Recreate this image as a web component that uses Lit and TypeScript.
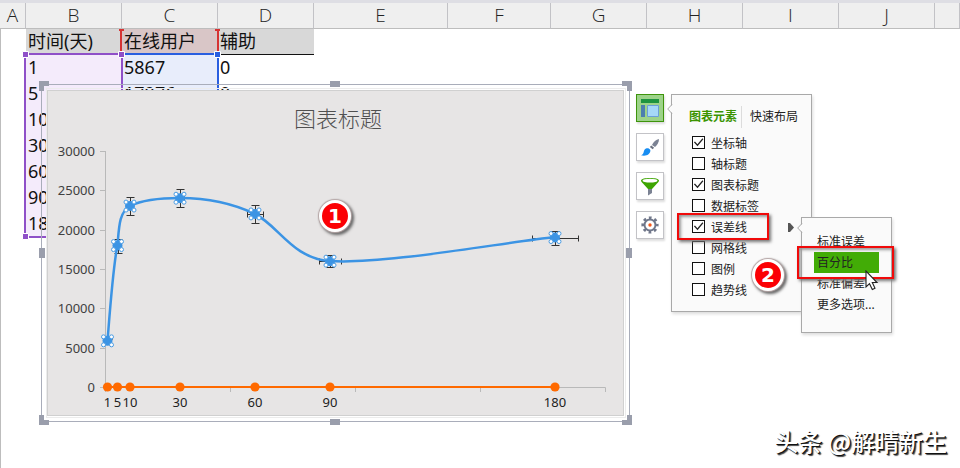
import { LitElement, html, svg, css } from "lit";
import { customElement, property, state } from "lit/decorators.js";

interface Sample {
  day: number;
  users: number;
}

const SAMPLES: Sample[] = [
  { day: 1, users: 5867 },
  { day: 5, users: 17976 },
  { day: 10, users: 23000 },
  { day: 30, users: 24000 },
  { day: 60, users: 22000 },
  { day: 90, users: 16000 },
  { day: 180, users: 19000 },
];

@customElement("sheet-grid")
class SheetGrid extends LitElement {
  static styles = css`
    :host { display: block; position: relative; }
    table {
      width: 100%;
      table-layout: fixed;
      border-collapse: separate;
      border-spacing: 0;
      font-size: 18px;
      color: #111;
    }
    .narrow { width: 26px; }
    .mid { width: 96px; }
    .wide { width: 134px; }
    .semi { width: 103px; }
    th, td { padding: 0; box-sizing: border-box; white-space: nowrap; vertical-align: top; }
    thead th {
      height: 26px;
      line-height: 25px;
      font-family: "Open Sans", "Noto Sans", sans-serif;
      font-size: 19px;
      font-weight: 300;
      color: #222;
      background: #efefef;
      border-right: 1px solid #c2c2c6;
      border-bottom: 1px solid #bdbdbd;
    }
    td { height: 26px; line-height: 24px; padding-left: 2px; }
    td.head { background: #d8d8d8; }
    td.pink { background: #d9c6c7; }
    td.line { border-bottom: 1px solid #111; }
    td.time { background: #f4ebfb; }
    td.users { background: #e8edfb; }
    td.edge { padding: 0; border-left: 1px solid #bdbdbd; }
    .ranges { position: absolute; left: 20px; top: 26px; width: 204px; height: 220px; }
  `;

  render() {
    const letters = ["A", "B", "C", "D", "E", "F", "G", "H", "I", "J", ""];
    const times = ["1", "5", "10", "30", "60", "90", "180"];
    const users = ["5867", "17976"];
    return html`
      <table>
        <colgroup>
          <col class="narrow" /><col class="mid" /><col class="mid" /><col class="mid" />
          <col class="wide" /><col class="semi" /><col class="mid" /><col class="mid" />
          <col class="mid" /><col class="mid" /><col />
        </colgroup>
        <thead>
          <tr>${letters.map((l) => html`<th>${l}</th>`)}</tr>
        </thead>
        <tbody>
          <tr>
            <td class="edge"></td>
            <td class="head">时间(天)</td>
            <td class="pink">在线用户</td>
            <td class="head line">辅助</td>
          </tr>
          ${times.map(
            (t, i) => html`<tr>
              <td class="edge"></td>
              <td class="time">${t}</td>
              <td class="users">${users[i] ?? ""}</td>
              <td>${i < 2 ? "0" : ""}</td>
            </tr>`
          )}
        </tbody>
      </table>
      <svg class="ranges" viewBox="20 29 204 220" aria-hidden="true">
        <path d="M25 54H122V237H25Z" fill="none" stroke="#8f50c8" stroke-width="2" />
        <path d="M122 54H218V236" fill="none" stroke="#2a5fe0" stroke-width="2" />
        <path d="M122 55V236" fill="none" stroke="#8f50c8" stroke-width="2" />
        <path d="M121 30V52M218 30V52" stroke="#d63333" stroke-width="2" />
        <path d="M119 30H124M215 30H220" stroke="#d63333" stroke-width="2" />
        <g stroke="#fff" stroke-width="1">
          <path d="M22.500 51.500h6v6h-6zM118.500 51.500h6v6h-6zM22.500 233.500h6v6h-6z" fill="#8f50c8" />
          <path d="M214.500 51.500h6v6h-6z" fill="#2a5fe0" />
        </g>
      </svg>
    `;
  }
}

@customElement("error-bar-chart")
class ErrorBarChart extends LitElement {
  static styles = css`
    :host { display: block; }
    svg { display: block; width: 100%; height: auto; }
    .title { font-size: 22px; font-weight: 300; fill: #505050; text-anchor: middle; }
    .tick { font-size: 13px; fill: #404040; text-anchor: end; }
    .day { font-size: 13px; fill: #222; text-anchor: middle; }
    .axis { stroke: #b9b9b9; fill: none; }
    .error { stroke: #333; fill: none; }
    .grip { fill: #fff; stroke: #4a9ce4; }
  `;

  private px(day: number) {
    return 105 + day * 2.5;
  }

  private py(value: number) {
    return 387 - (value * 236) / 30000;
  }

  private errorBar(s: Sample) {
    const x = Math.round(this.px(s.day)) + 0.5;
    const y = Math.round(this.py(s.users)) + 0.5;
    const dx = Math.round(s.day * 0.05 * 2.5);
    const dy = Math.round((s.users * 0.05 * 236) / 30000);
    return svg`<path class="error" d="M${x} ${y - dy}V${y + dy}M${x - 4} ${y - dy}h8M${x - 4} ${y + dy}h8
      M${x - dx} ${y}H${x + dx}M${x - dx} ${y - 3}v6M${x + dx} ${y - 3}v6"/>`;
  }

  private marker(s: Sample) {
    const x = this.px(s.day);
    const y = this.py(s.users);
    return svg`
      <circle cx=${x} cy=${y} r="5" fill="#3c94e4"/>
      ${[[-4, -4], [4, -4], [-4, 4], [4, 4]].map(
        ([a, b]) => svg`<circle class="grip" cx=${x + a} cy=${y + b} r="2"/>`
      )}`;
  }

  render() {
    const levels = [0, 5000, 10000, 15000, 20000, 25000, 30000];
    const frame = "#9a9eac";
    return html`
      <svg viewBox="38 81 595 344" role="img" aria-label="图表标题">
        <rect x="41.500" y="84.500" width="588" height="337" fill="none" stroke="#a9adba" />
        <rect x="46.500" y="88.500" width="579" height="329" fill="none" stroke="#ececec" />
        <rect x="47.500" y="90.500" width="576" height="325" fill="#e7e5e5" stroke="#d0d0d0" />
        <g fill=${frame}>
          <path d="M39 81h10v5h-5v5h-5zM622 81h10v10h-5v-5h-5zM39 415h5v5h5v5h-10zM632 415v10h-10v-5h5v-5z" />
          <path d="M330 81h10v6h-10zM330 419h10v6h-10zM39 248h6v10h-6zM626 248h6v10h-6z" />
        </g>
        <text class="title" x="338" y="127">图表标题</text>
        <path class="axis" d="M105.500 151V392M105 387.500H605.500V392M230.500 387v5M355.500 387v5M480.500 387v5" />
        ${levels.map((v) => {
          const y = Math.round(this.py(v)) + 0.5;
          return svg`<path class="axis" d="M100 ${y}h6"/>
            <text class="tick" x="95" y=${y + 4}>${v}</text>`;
        })}
        ${SAMPLES.map((s) => this.errorBar(s))}
        <path
          d="M107.500 341C110 310 113 267 117.500 245C119 228 119 212 130 206C142 200 162 198 180 198
             C205 198 232 203 255 214C279 226 293 259 330 261C380 265 500 243 555 237"
          fill="none" stroke="#3c94e4" stroke-width="2.500" />
        ${SAMPLES.map((s) => this.marker(s))}
        <path d="M107 387H555" stroke="#ff6a00" stroke-width="2" />
        ${SAMPLES.map(
          (s) => svg`<circle cx=${this.px(s.day)} cy="387" r="4.600" fill="#ff6a00"/>
            <text class="day" x=${this.px(s.day)} y="407">${s.day}</text>`
        )}
      </svg>
    `;
  }
}

@customElement("step-badge")
class StepBadge extends LitElement {
  static styles = css`
    :host {
      display: grid;
      place-items: center;
      box-sizing: border-box;
      width: 32px;
      height: 32px;
      border: 3px solid #fff;
      border-radius: 50%;
      background: #fb0004;
      box-shadow: 0 0 1px 1px #b5a5a5, 2px 2px 3px 1px #666;
      color: #fff;
      font: bold 20px/26px "DejaVu Sans", "Noto Sans", sans-serif;
    }
  `;
  @property({ type: Number }) step = 1;
  render() {
    return html`${this.step}`;
  }
}

@customElement("element-panel")
class ElementPanel extends LitElement {
  static styles = css`
    :host { display: flex; align-items: flex-start; gap: 7px; }
    button { font: inherit; color: inherit; padding: 0; border: 0; background: none; text-align: left; }
    .tools { display: flex; flex-direction: column; gap: 11px; }
    .tool {
      box-sizing: border-box;
      width: 28px;
      height: 28px;
      border: 1px solid #c3c3c7;
      background: #fff;
      box-shadow: 1px 2px 2px #ddd;
    }
    .tool.on { background: #9dd389; border-color: #3e940c; }
    .tool svg { display: block; width: 26px; height: 26px; }
    .panel {
      position: relative;
      box-sizing: border-box;
      width: 141px;
      padding: 11px 0 11px;
      border: 1px solid #a9a9a9;
      background: #fafafa;
      box-shadow: 1px 2px 3px #ddd;
      color: #222;
      font-size: 12px;
    }
    .notch { position: absolute; left: -5px; width: 6px; height: 10px; }
    .panel > .notch { top: 9px; }
    .tabs { display: flex; padding-left: 17px; line-height: 22px; margin-bottom: 4px; }
    .tabs button { padding-right: 4px; }
    .tabs button + button { border-left: 1px solid #dcdcdc; padding: 0 0 0 8px; }
    .tabs .current { color: #3b9400; font-weight: bold; }
    .row { display: flex; align-items: center; gap: 6px; height: 21px; padding-left: 20px; }
    input {
      appearance: none;
      box-sizing: border-box;
      display: grid;
      width: 13px;
      height: 13px;
      margin: 0;
      border: 1px solid #111;
      background: #fff;
    }
    input:checked::before {
      content: "";
      background: #222;
      clip-path: polygon(8% 48%, 18% 42%, 40% 66%, 86% 12%, 94% 20%, 41% 84%);
    }
    .arrow { position: absolute; left: 116px; top: 128px; width: 6px; height: 9px; }
    .menu {
      position: absolute;
      left: 129px;
      top: 122px;
      box-sizing: border-box;
      width: 91px;
      padding: 13px 12px 17px;
      display: flex;
      flex-direction: column;
      border: 1px solid #a9a9a9;
      background: #fafafa;
      box-shadow: 1px 2px 3px #ddd;
    }
    .menu > .notch { top: 5px; }
    .menu button { height: 21px; line-height: 21px; padding-left: 3px; white-space: nowrap; }
    .menu .hot { background: #42ac06; }
    .mark {
      position: absolute;
      box-sizing: border-box;
      border: 2px solid #f00a0a;
      box-shadow: 2px 2px 3px #777, inset 2px 2px 3px #999;
      pointer-events: none;
    }
    .mark.first { left: 5px; top: 118px; width: 92px; height: 27px; }
    .mark.second { left: 125px; top: 151px; width: 97px; height: 33px; }
    step-badge { position: absolute; left: 80px; top: 164px; }
    .pointer { position: absolute; left: 193px; top: 175px; width: 14px; height: 22px; }
  `;

  @state() private checked = new Set(["坐标轴", "图表标题", "误差线"]);

  private toggle(name: string) {
    const next = new Set(this.checked);
    next.has(name) ? next.delete(name) : next.add(name);
    this.checked = next;
  }

  private notch() {
    return html`<svg class="notch" viewBox="0 0 6 10" aria-hidden="true">
      <path d="M6 0L1 5L6 10Z" fill="#fafafa" />
      <path d="M5 0.500L0.700 5L5 9.500" fill="none" stroke="#a9a9a9" />
    </svg>`;
  }

  render() {
    const items = ["坐标轴", "轴标题", "图表标题", "数据标签", "误差线", "网格线", "图例", "趋势线"];
    const choices = ["标准误差", "百分比", "标准偏差", "更多选项..."];
    return html`
      <div class="tools">
        <button class="tool on" aria-label="图表元素">
          <svg viewBox="0 0 26 26">
            <path d="M4 4h18v4H4z" fill="#1e9440" />
            <path d="M4 10h4v12H4z" fill="#4c7fae" />
            <path d="M10.500 10.500h11v11h-11z" fill="#a6d8f8" stroke="#6b9fd8" />
          </svg>
        </button>
        <button class="tool" aria-label="图表样式">
          <svg viewBox="0 0 26 26">
            <path d="M22 5C19 5.500 16.500 8 15 11l3 2c2-1.700 4-4.500 4-8z" fill="#7b8293" />
            <path d="M14.300 11.500l2.800 2.200-1.500 1.600-2.800-2.300z" fill="#6b7180" />
            <path d="M9 14.500c1.500-.8 3.500-.2 4.200 1.200.8 2-1.200 4.800-3.700 5.600-1.800.6-3.800.5-5.500-.1 1.800-.5 2.200-1.500 2.700-3.200.4-1.600 1.100-2.900 2.300-3.500z" fill="#188df2" />
          </svg>
        </button>
        <button class="tool" aria-label="图表筛选器">
          <svg viewBox="0 0 26 26">
            <path d="M11 15h4v5l-4 2.500z" fill="#7b8293" />
            <path d="M4 7.500c0-3.300 18-3.300 18 0 0 1-1 2.200-2 3l-5 5.500h-4l-5-5.500c-1-.8-2-2-2-3z" fill="#3ea503" />
            <ellipse cx="13" cy="7.700" rx="7.500" ry="1.900" fill="#fff" />
          </svg>
        </button>
        <button class="tool" aria-label="设置">
          <svg viewBox="0 0 26 26">
            <circle cx="13" cy="13" r="7.200" fill="none" stroke="#70778a" stroke-width="2.800" stroke-dasharray="2.700 2.955" stroke-dashoffset="1.350" />
            <circle cx="13" cy="13" r="5.500" fill="none" stroke="#70778a" stroke-width="2" />
            <circle cx="13" cy="13" r="1.700" fill="#f4581c" />
          </svg>
        </button>
      </div>
      <div class="panel">
        ${this.notch()}
        <div class="tabs">
          <button class="current">图表元素</button>
          <button>快速布局</button>
        </div>
        ${items.map(
          (name) => html`<label class="row">
            <input type="checkbox" .checked=${this.checked.has(name)} @change=${() => this.toggle(name)} />
            ${name}
          </label>`
        )}
        <svg class="arrow" viewBox="0 0 6 9" aria-hidden="true">
          <path d="M0 0h2l4 4.500-4 4.500H0z" fill="#555" />
        </svg>
        <div class="menu">
          ${this.notch()}
          ${choices.map((c, i) => html`<button class=${i === 1 ? "hot" : ""}>${c}</button>`)}
        </div>
        <div class="mark first"></div>
        <div class="mark second"></div>
        <step-badge .step=${2}></step-badge>
        <svg class="pointer" viewBox="0 0 14 22" aria-hidden="true">
          <path d="M1 1V17L4.500 13.700L7.300 19.500L10 18.200L7.300 12.500H12Z" fill="#fff" stroke="#222" stroke-width="1.100" />
        </svg>
      </div>
    `;
  }
}

@customElement("app-root")
class AppRoot extends LitElement {
  static styles = css`
    :host {
      display: block;
      position: relative;
      box-sizing: border-box;
      min-height: 100vh;
      overflow: hidden;
      border-top: 3px solid #dedee4;
      background: #fff;
      font-family: "Noto Sans", "Noto Sans CJK SC", sans-serif;
    }
    main { box-sizing: border-box; min-height: calc(100vh - 3px); border-left: 1px solid #bdbdbd; }
    sheet-grid { margin-left: -1px; }
    error-bar-chart { position: absolute; left: 38px; top: 78px; width: 595px; }
    element-panel { position: absolute; left: 636px; top: 91px; }
    step-badge { position: absolute; left: 319px; top: 197px; }
    .credit {
      position: absolute;
      right: 13px;
      bottom: 9px;
      color: #fff;
      font-family: "Noto Sans CJK SC", sans-serif;
      font-size: 24px;
      line-height: 36px;
      font-weight: 500;
      text-shadow: 1px 1px 0 #111, 2px 2px 1px #444;
      white-space: nowrap;
    }
  `;

  render() {
    return html`
      <main>
        <sheet-grid></sheet-grid>
        <error-bar-chart></error-bar-chart>
        <step-badge .step=${1}></step-badge>
        <element-panel></element-panel>
        <div class="credit">头条 @解晴新生</div>
      </main>
    `;
  }
}
